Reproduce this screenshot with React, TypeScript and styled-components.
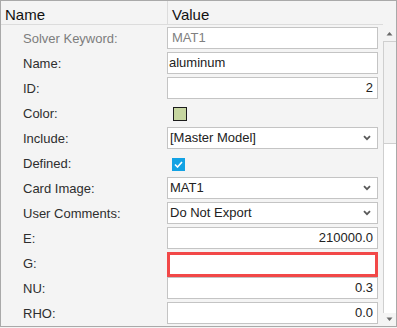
import React from "react";
import styled, { createGlobalStyle } from "styled-components";

const Global = createGlobalStyle`
  html, body { margin: 0; padding: 0; background: #f4f4f4; }
  body { font-family: "Liberation Sans", Arial, sans-serif; }
`;

const Frame = styled.div`
  box-sizing: border-box;
  width: 397px;
  height: 327px;
  border: 1px solid #a9a9a9;
  background: #f4f4f4;
  display: flex;
  overflow: hidden;
`;

const Main = styled.div`
  flex: 1;
  display: flex;
  flex-direction: column;
  min-width: 0;
`;

const Header = styled.div`
  display: grid;
  grid-template-columns: 167px 1fr;
  height: 24px;
  box-sizing: border-box;
  border-bottom: 1px solid #dcdcdc;
`;

const HeadCell = styled.div<{ $divider?: boolean; $pad: number }>`
  box-sizing: border-box;
  font-size: 15px;
  line-height: 19px;
  padding: 4px 0 0 ${(p) => p.$pad}px;
  color: #111;
  border-right: ${(p) => (p.$divider ? "1px solid #dcdcdc" : "none")};
`;

const Rows = styled.div`
  display: flex;
  flex-direction: column;
`;

const Row = styled.div`
  display: grid;
  grid-template-columns: 166px 1fr;
  height: 25px;
`;

const Label = styled.div<{ $muted?: boolean }>`
  box-sizing: border-box;
  height: 25px;
  padding: 1px 0 0 22px;
  font-size: 13px;
  line-height: 25px;
  color: ${(p) => (p.$muted ? "#7d7d7d" : "#2e2e2e")};
  white-space: nowrap;
`;

const ValueCell = styled.div`
  box-sizing: border-box;
  padding: 2px 5px 0 0;
  display: flex;
  align-items: flex-start;
  position: relative;
`;

const Field = styled.div<{ $align?: "left" | "right"; $muted?: boolean; $error?: boolean; $padLeft?: number }>`
  box-sizing: border-box;
  width: 100%;
  height: ${(p) => (p.$error ? 25 : 22)}px;
  background: #fff;
  border: ${(p) => (p.$error ? "3px solid #f24848" : "1px solid #c4c4c4")};
  font-size: 13px;
  line-height: 20px;
  color: ${(p) => (p.$muted ? "#808080" : "#222")};
  text-align: ${(p) => p.$align ?? "left"};
  padding: 0 4px 0 ${(p) => p.$padLeft ?? 1}px;
  position: relative;
  z-index: ${(p) => (p.$error ? 1 : 0)};
  white-space: nowrap;
  overflow: hidden;
`;

const Select = styled.div`
  box-sizing: border-box;
  width: 100%;
  height: 22px;
  background: #fff;
  border: 1px solid #c4c4c4;
  font-size: 13px;
  line-height: 20px;
  color: #222;
  padding: 0 6px 0 2px;
  display: flex;
  align-items: center;
  justify-content: space-between;
`;

const Chevron = styled.svg`
  width: 8px;
  height: 6px;
  flex: none;
`;

const Swatch = styled.div`
  box-sizing: border-box;
  width: 14px;
  height: 14px;
  margin: 5px 0 0 6px;
  background: #c6d6a0;
  border: 1px solid #1c1c1c;
`;

const Check = styled.div`
  box-sizing: border-box;
  width: 13px;
  height: 13px;
  margin: 6px 0 0 5px;
  background: #12a2e4;
  display: flex;
  align-items: center;
  justify-content: center;
`;

const ScrollBar = styled.div`
  width: 13px;
  display: flex;
  flex-direction: column;
`;

const ScrollSpacer = styled.div`
  height: 24px;
`;

const ArrowButton = styled.div<{ $h: number }>`
  height: ${(p) => p.$h}px;
  display: flex;
  align-items: center;
  justify-content: center;
`;

const Track = styled.div`
  flex: 1;
  box-sizing: border-box;
  border-left: 1px solid #cfcfcf;
  border-top: 1px solid #cfcfcf;
  background: #fff;
  display: flex;
  flex-direction: column;
`;

const Thumb = styled.div`
  height: 101px;
  background: #f2f2f2;
  border-bottom: 1px solid #cfcfcf;
`;

const ChevronDown = () => (
  <Chevron viewBox="0 0 8 6">
    <path d="M1 1.2 L4 4.2 L7 1.2" fill="none" stroke="#5a5a5a" strokeWidth="1.8" />
  </Chevron>
);

const SmallArrow = ({ up }: { up?: boolean }) => (
  <svg width="7" height="5" viewBox="0 0 7 5">
    <path
      d={up ? "M0.5 4.5 L3.5 1 L6.5 4.5 Z" : "M0.5 0.5 L3.5 4 L6.5 0.5 Z"}
      fill="#6a6a6a"
    />
  </svg>
);

type Kind =
  | { type: "text"; value: string; align?: "left" | "right"; muted?: boolean; error?: boolean; padLeft?: number }
  | { type: "select"; value: string }
  | { type: "swatch" }
  | { type: "check" };

const rows: { label: string; muted?: boolean; kind: Kind }[] = [
  { label: "Solver Keyword:", muted: true, kind: { type: "text", value: "MAT1", muted: true, padLeft: 4 } },
  { label: "Name:", kind: { type: "text", value: "aluminum" } },
  { label: "ID:", kind: { type: "text", value: "2", align: "right" } },
  { label: "Color:", kind: { type: "swatch" } },
  { label: "Include:", kind: { type: "select", value: "[Master Model]" } },
  { label: "Defined:", kind: { type: "check" } },
  { label: "Card Image:", kind: { type: "select", value: "MAT1" } },
  { label: "User Comments:", kind: { type: "select", value: "Do Not Export" } },
  { label: "E:", kind: { type: "text", value: "210000.0", align: "right" } },
  { label: "G:", kind: { type: "text", value: "", error: true } },
  { label: "NU:", kind: { type: "text", value: "0.3", align: "right" } },
  { label: "RHO:", kind: { type: "text", value: "0.0", align: "right" } },
];

const renderValue = (k: Kind) => {
  switch (k.type) {
    case "text":
      return (
        <Field $align={k.align} $muted={k.muted} $error={k.error} $padLeft={k.padLeft}>
          {k.value}
        </Field>
      );
    case "select":
      return (
        <Select>
          <span>{k.value}</span>
          <ChevronDown />
        </Select>
      );
    case "swatch":
      return <Swatch />;
    case "check":
      return (
        <Check>
          <svg width="9" height="7" viewBox="0 0 9 7">
            <path d="M1 3.5 L3.5 6 L8 1" fill="none" stroke="#fff" strokeWidth="1.6" />
          </svg>
        </Check>
      );
  }
};

export default function App() {
  return (
    <>
      <Global />
      <Frame>
        <Main>
          <Header>
            <HeadCell $divider $pad={4}>Name</HeadCell>
            <HeadCell $pad={4}>Value</HeadCell>
          </Header>
          <Rows>
            {rows.map((r) => (
              <Row key={r.label}>
                <Label $muted={r.muted}>{r.label}</Label>
                <ValueCell>{renderValue(r.kind)}</ValueCell>
              </Row>
            ))}
          </Rows>
        </Main>
        <ScrollBar>
          <ScrollSpacer />
          <ArrowButton $h={16}>
            <SmallArrow up />
          </ArrowButton>
          <Track>
            <Thumb />
          </Track>
          <ArrowButton $h={13}>
            <SmallArrow />
          </ArrowButton>
        </ScrollBar>
      </Frame>
    </>
  );
}
